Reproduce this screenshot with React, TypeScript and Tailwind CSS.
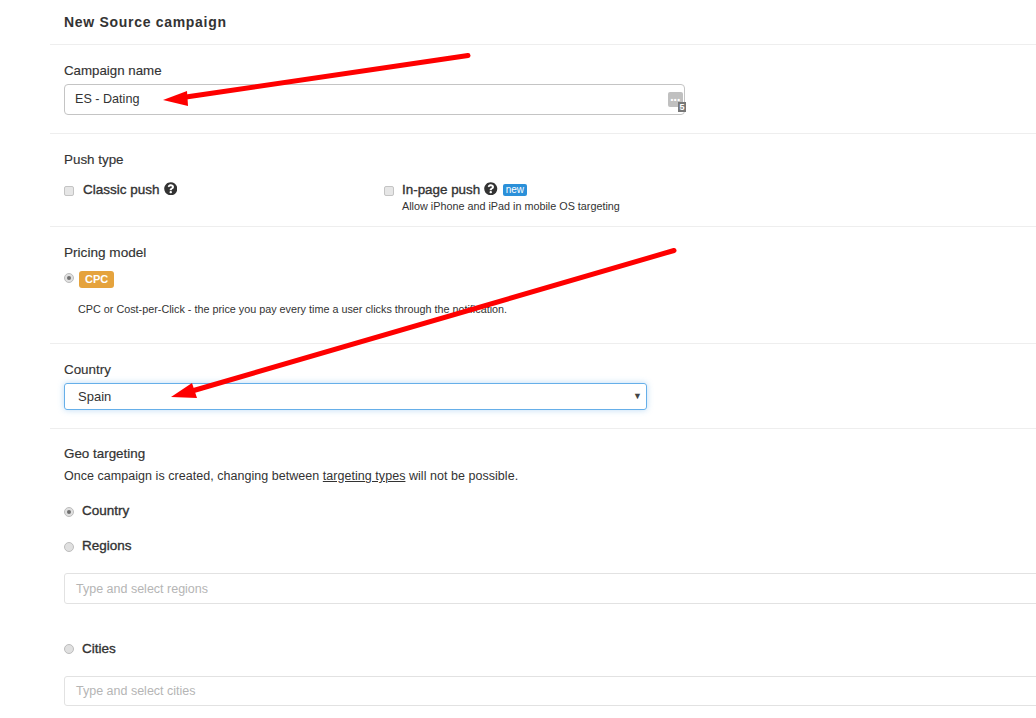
import React from "react";
import { FaQuestionCircle } from "react-icons/fa";

const Checkbox = () => (
  <span className="mt-[1px] block h-[10px] w-[10px] shrink-0 rounded-[2px] border border-[#c4c4c4] bg-[#e6e6e6]" />
);

const Radio = ({ checked }: { checked?: boolean }) => (
  <span className="flex h-[10px] w-[10px] shrink-0 items-center justify-center rounded-full border border-[#bdbdbd] bg-[#e0e0e0]">
    {checked && <span className="block h-[4px] w-[4px] rounded-full bg-[#6f6f6f]" />}
  </span>
);

const Arrows = () => (
  <svg className="pointer-events-none absolute left-0 top-0" width="1036" height="718" viewBox="0 0 1036 718">
    <path d="M468 55.500 L186 97" stroke="#fe0000" strokeWidth="5" strokeLinecap="round" fill="none" />
    <path d="M163 100 L187 91 L188 106 Z" fill="#fe0000" />
    <path d="M674 250.500 L192 391" stroke="#fe0000" strokeWidth="5" strokeLinecap="round" fill="none" />
    <path d="M171 397 L192 383 L197 398 Z" fill="#fe0000" />
  </svg>
);

const App = () => {
  return (
    <div className="relative h-[718px] w-[1036px] overflow-hidden bg-white font-['Liberation_Sans',Arial,sans-serif] text-[#333]">
      <div className="ml-[50px] w-[1100px]">
        <div className="h-[45px] border-b border-[#eee] pl-[14px] pt-[13px]">
          <h1 className="text-[14px] font-bold leading-[18px] tracking-[0.7px] text-[#333]">New Source campaign</h1>
        </div>

        <div className="h-[89px] border-b border-[#eee] pl-[14px] pt-[18px]">
          <label className="block text-[13.3px] leading-[15px] [-webkit-text-stroke:0.15px]">Campaign name</label>
          <div className="relative mt-[6px] flex h-[31px] w-[621px] items-center rounded-[4px] border border-[#c4c4c4] pl-[10px] text-[12.6px]">
            ES - Dating
            <div className="absolute right-[1px] top-[7px] flex h-[15px] w-[15px] items-center justify-center rounded-[2px] bg-[#c0c0c0] text-[8px] font-bold leading-none tracking-[0.5px] text-white">
              •••
            </div>
            <div className="absolute bottom-[2px] right-[-2px] flex h-[10px] w-[8px] items-center justify-center bg-[#777] text-[9px] font-bold leading-none text-white">
              5
            </div>
          </div>
        </div>

        <div className="h-[93px] border-b border-[#eee] pl-[14px] pt-[18px]">
          <div className="text-[13.4px] leading-[15px] [-webkit-text-stroke:0.15px]">Push type</div>
          <div className="mt-[15px] flex items-start">
            <div className="flex w-[320px] gap-[9px]">
              <span className="mt-[3px]"><Checkbox /></span>
              <div className="flex items-center gap-[4px] text-[13.5px] leading-[15px] text-[#333] [-webkit-text-stroke:0.35px]">
                Classic push
                <FaQuestionCircle className="-mt-[2px] text-[13.5px] text-[#333]" />
              </div>
            </div>
            <div className="flex gap-[8px]">
              <span className="mt-[3px]"><Checkbox /></span>
              <div>
                <div className="flex items-center text-[13.4px] leading-[15px] text-[#333] [-webkit-text-stroke:0.35px]">
                  In-page push
                  <FaQuestionCircle className="-mt-[2px] ml-[4px] text-[13.5px] text-[#333]" />
                  <span className="ml-[5px] rounded-[2px] bg-[#2b90d9] px-[3px] text-[10px] leading-[12px] text-white [-webkit-text-stroke:0px]">new</span>
                </div>
                <div className="mt-[2px] text-[10.8px] leading-[14px] text-[#333]">Allow iPhone and iPad in mobile OS targeting</div>
              </div>
            </div>
          </div>
        </div>

        <div className="h-[117px] border-b border-[#eee] pl-[14px] pt-[18px]">
          <div className="text-[13.6px] leading-[15px] [-webkit-text-stroke:0.15px]">Pricing model</div>
          <div className="mt-[11px] flex items-center gap-[5px]">
            <span className="-mt-[3px]"><Radio checked /></span>
            <span className="rounded-[3px] bg-[#e5a33d] px-[6px] text-[11px] font-bold leading-[17px] text-white">CPC</span>
          </div>
          <p className="ml-[14px] mt-[14px] text-[10.8px] leading-[14px] text-[#333]">
            CPC or Cost-per-Click - the price you pay every time a user clicks through the notification.
          </p>
        </div>

        <div className="h-[85px] border-b border-[#eee] pl-[14px] pt-[18px]">
          <label className="block text-[13.4px] leading-[15px] [-webkit-text-stroke:0.15px]">Country</label>
          <div className="mt-[6px] flex h-[27px] w-[583px] items-center justify-between rounded-[3px] border border-[#66afe9] pl-[13px] pr-[4px] text-[13px] shadow-[0_0_6px_rgba(102,175,233,0.45)]">
            Spain
            <span className="text-[9px] text-[#444]">▼</span>
          </div>
        </div>

        <div className="pl-[14px] pt-[17px]">
          <div className="text-[13.4px] leading-[15px] [-webkit-text-stroke:0.2px]">Geo targeting</div>
          <p className="mt-[8px] text-[12.5px] leading-[15px] tracking-[0.04px]">
            Once campaign is created, changing between <a className="underline">targeting types</a> will not be possible.
          </p>
          <div className="mt-[19px] flex items-center gap-[8px] text-[13.5px] leading-[15px] text-[#333] [-webkit-text-stroke:0.35px]">
            <span className="mt-[2px]"><Radio checked /></span>
            Country
          </div>
          <div className="mt-[20px] flex items-center gap-[8px] text-[13.5px] leading-[15px] text-[#333] [-webkit-text-stroke:0.35px]">
            <span className="mt-[2px]"><Radio /></span>
            Regions
          </div>
          <div className="mt-[20px] flex h-[31px] items-center rounded-[3px] border border-[#e2e2e2] pl-[11px] pt-[1px] text-[12.5px] text-[#b5b5b5]">
            Type and select regions
          </div>
          <div className="mt-[37px] flex items-center gap-[8px] text-[13.5px] leading-[15px] text-[#333] [-webkit-text-stroke:0.35px]">
            <span className="mt-[1px]"><Radio /></span>
            Cities
          </div>
          <div className="mt-[20px] flex h-[30px] items-center rounded-[3px] border border-[#e2e2e2] pl-[11px] text-[12.5px] text-[#b5b5b5]">
            Type and select cities
          </div>
        </div>
      </div>
      <Arrows />
    </div>
  );
};

export default App;
